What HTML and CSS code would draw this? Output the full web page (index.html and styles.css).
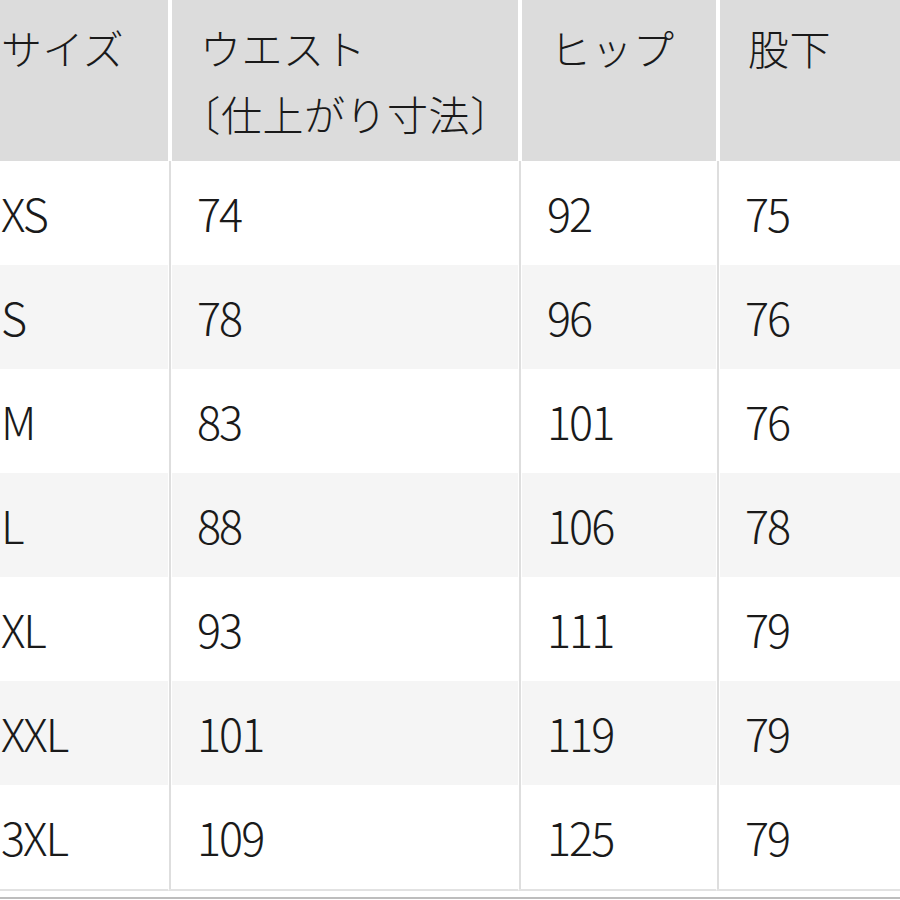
FILE: index.html
```html
<!DOCTYPE html>
<html lang="ja">
<head>
<meta charset="utf-8">
<link rel="stylesheet" href="styles.css">
</head>
<body>
<div class="wrap">
<table class="size-table">
<colgroup>
<col class="c1"><col class="c2"><col class="c3"><col class="c4">
</colgroup>
<thead>
<tr>
<th>サイズ</th>
<th>ウエスト<br><span class="br">〔</span>仕上がり寸法<span class="br">〕</span></th>
<th>ヒップ</th>
<th>股下</th>
</tr>
</thead>
<tbody>
<tr><td>XS</td><td>74</td><td>92</td><td>75</td></tr>
<tr><td>S</td><td>78</td><td>96</td><td>76</td></tr>
<tr><td>M</td><td>83</td><td>101</td><td>76</td></tr>
<tr><td>L</td><td>88</td><td>106</td><td>78</td></tr>
<tr><td>XL</td><td>93</td><td>111</td><td>79</td></tr>
<tr><td>XXL</td><td>101</td><td>119</td><td>79</td></tr>
<tr><td>3XL</td><td>109</td><td>125</td><td>79</td></tr>
</tbody>
</table>
</div>
</body>
</html>
```

FILE: styles.css
```css
html, body {
  margin: 0;
  padding: 0;
  background: #fff;
  overflow: hidden;
}
body {
  width: 900px;
  height: 900px;
  font-family: "Noto Sans CJK JP", "Noto Sans", sans-serif;
  color: #1a1a1a;
}
.wrap {
  width: 900px;
  height: 899px;
  overflow: hidden;
  border-bottom: 2px solid #bdbdbd;
  box-sizing: border-box;
}
.size-table {
  margin-left: -27px;
  width: 960px;
  border-collapse: separate;
  border-spacing: 0;
  table-layout: fixed;
}
.c1 { width: 195px; }
.c2 { width: 350px; }
.c3 { width: 198px; }
.c4 { width: 217px; }

.size-table th {
  height: 161px;
  box-sizing: border-box;
  background: #dcdcdc;
  font-weight: 300;
  font-size: 41px;
  letter-spacing: 0.5px;
  line-height: 66px;
  text-align: left;
  vertical-align: top;
  padding: 14px 0 0 28px;
}
.size-table th + th {
  border-left: 4px solid #fff;
}
.br {
  font-feature-settings: "halt";
}
.size-table td {
  height: 104px;
  box-sizing: border-box;
  font-weight: 300;
  font-size: 45px;
  letter-spacing: -2px;
  line-height: 104px;
  padding: 0 0 0 28px;
  vertical-align: middle;
}
.size-table td + td {
  border-left: 1px solid #fff;
  padding-left: 28px;
  box-shadow: inset 2px 0 0 #dedede, inset 3px 0 0 #fff;
}
.size-table tbody tr:nth-child(even) td {
  background-color: #f5f5f5;
}
.size-table tbody tr:last-child td {
  height: 105px;
  border-bottom: 2px solid #e2e2e2;
}
```
